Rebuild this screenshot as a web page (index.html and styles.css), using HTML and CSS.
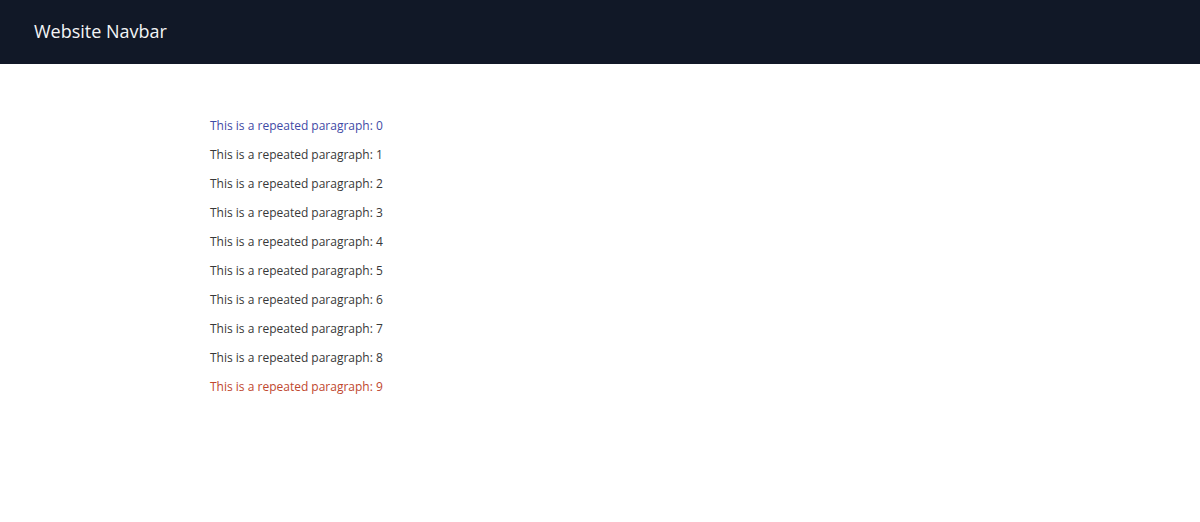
FILE: index.html
```html
<!DOCTYPE html>
<html lang="en">
<head>
<meta charset="utf-8">
<title>Website Navbar</title>
<link rel="stylesheet" href="styles.css">
</head>
<body>
<nav class="navbar"><span class="brand">Website Navbar</span></nav>
<main class="content">
  <p class="para first">This is a repeated paragraph: 0</p>
  <p class="para">This is a repeated paragraph: 1</p>
  <p class="para">This is a repeated paragraph: 2</p>
  <p class="para">This is a repeated paragraph: 3</p>
  <p class="para">This is a repeated paragraph: 4</p>
  <p class="para">This is a repeated paragraph: 5</p>
  <p class="para">This is a repeated paragraph: 6</p>
  <p class="para">This is a repeated paragraph: 7</p>
  <p class="para">This is a repeated paragraph: 8</p>
  <p class="para last">This is a repeated paragraph: 9</p>
</main>
</body>
</html>
```
FILE: styles.css
```css
html, body {
  margin: 0;
  padding: 0;
  background: #ffffff;
  font-family: "Open Sans", "Liberation Sans", sans-serif;
}
.navbar {
  height: 64px;
  background: #111827;
  display: flex;
  align-items: center;
  padding-left: 34px;
}
.brand {
  color: #f3f4f6;
  font-size: 18px;
  margin-top: -2px;
}
.content {
  padding: 54px 0 0 210px;
  display: flex;
  flex-direction: column;
  gap: 13px;
}
.para {
  margin: 0;
  font-size: 12px;
  line-height: 16px;
  color: #383838;
}
.para.first { color: #3f4aa5; }
.para.last { color: #c0472e; }
```
